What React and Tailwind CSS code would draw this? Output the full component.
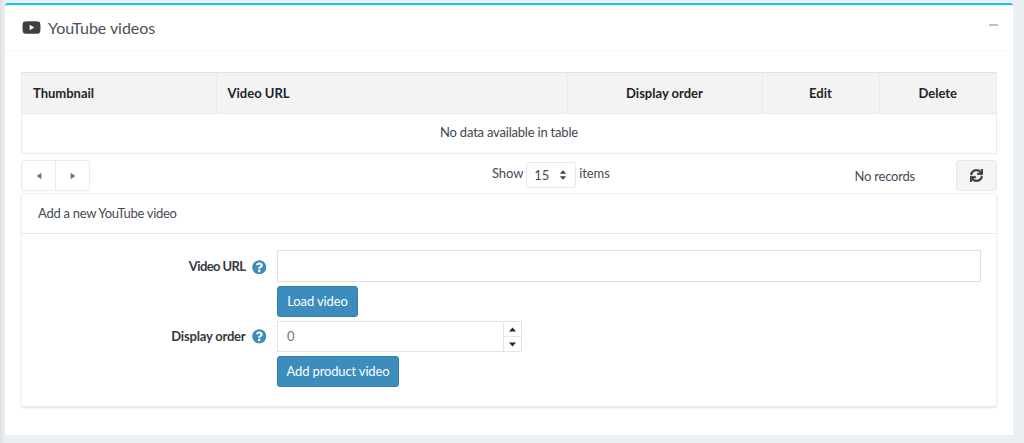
import React from "react";
import { FaYoutube, FaSync, FaQuestionCircle } from "react-icons/fa";

function Th({ children, className = "" }) {
  return <th className={`h-[40px] px-[11px] pt-[2px] text-[13px] font-bold text-[#212529] border-r border-[#e9ebee] last:border-r-0 ${className}`}>{children}</th>;
}

function Help() {
  return <FaQuestionCircle className="w-[14.5px] h-[14.5px] text-[#3c8dbc] shrink-0" />;
}

function Tri({ points, className }) {
  return (
    <svg viewBox="0 0 10 10" className={className} fill="currentColor">
      <polygon points={points} />
    </svg>
  );
}

export default function App() {
  return (
    <div className="h-[443px] overflow-hidden bg-[#ecf0f5] pt-[3px] pl-[5px] pr-[11px] font-['Lato','Liberation_Sans',sans-serif] text-[#444c56] bg-gradient-to-r from-[#dde1e6] to-[#ecf0f5] bg-[length:5px_100%] bg-no-repeat">
      <div className="h-[432px] bg-white rounded-t-[3px] border-t-2 border-[#0cc4f2] flex flex-col">
        <div className="h-[46px] shrink-0 border-b border-[#f6f7f8] flex items-center justify-between pl-[17px] pr-[15px]">
          <div className="flex items-center gap-[7px]">
            <FaYoutube className="w-[19px] h-[19px] text-[#3d4146]" />
            <span className="text-[16px] tracking-[-0.05px] text-[#4b5159]">YouTube videos</span>
          </div>
          <div className="w-[9px] h-[2px] bg-[#bcc2c9] mb-[6px]" />
        </div>

        <div className="px-[16px] pt-[21px]">
          <div className="border border-[#e9ebee] border-t-[#dfe2e5]">
            <table className="w-full table-fixed border-collapse">
              <colgroup>
                <col className="w-[194px]" />
                <col className="w-[351px]" />
                <col className="w-[195px]" />
                <col className="w-[117px]" />
                <col />
              </colgroup>
              <thead>
                <tr className="bg-[#f3f3f4] border-b border-[#e6e8ea]">
                  <Th className="text-left">Thumbnail</Th>
                  <Th className="text-left">Video URL</Th>
                  <Th className="text-center">Display order</Th>
                  <Th className="text-center">Edit</Th>
                  <Th className="text-center">Delete</Th>
                </tr>
              </thead>
              <tbody>
                <tr>
                  <td colSpan={5} className="h-[40px] pb-px text-center text-[13px] tracking-[-0.2px] text-[#3f464e]">No data available in table</td>
                </tr>
              </tbody>
            </table>
          </div>

          <div className="h-[32px] mt-[6px] flex items-start">
            <div className="w-[69px] h-[31px] flex border border-[#e9ebee] rounded-[3px] text-[#6c757d]">
              <div className="flex-1 flex items-center justify-center border-r border-[#e9ebee]">
                <Tri points="8,1 8,9 2,5" className="w-[8px] h-[8px]" />
              </div>
              <div className="flex-1 flex items-center justify-center">
                <Tri points="2,1 2,9 8,5" className="w-[8px] h-[8px]" />
              </div>
            </div>
            <div className="ml-[402px] flex items-center gap-[3px] pt-[2px] text-[13px] tracking-[-0.1px]">
              <span className="-mt-[2px]">Show</span>
              <div className="w-[50px] h-[26px] flex items-center justify-between border border-[#e6e8ea] rounded-[2px] pl-[7px] pr-[8px] text-[13px]">
                <span className="pt-[2px]">15</span>
                <svg viewBox="0 0 10 12" className="w-[8px] h-[10px] text-[#3f464e]" fill="currentColor">
                  <polygon points="5,0 9,4.5 1,4.5" />
                  <polygon points="5,12 9,7.5 1,7.5" />
                </svg>
              </div>
              <span className="-mt-[2px]">items</span>
            </div>
            <span className="ml-auto text-[13px] tracking-[-0.2px] mt-[7px] mr-[41px]">No records</span>
            <div className="w-[41px] h-[31px] flex items-center justify-center bg-[#f4f4f4] border border-[#e6e8ea] rounded-[3px]">
              <FaSync className="w-[13px] h-[13px] text-[#3a4046] stroke-[20px]" />
            </div>
          </div>

          <div className="h-[214px] mt-[1px] border border-[#eef0f2] rounded-[3px] shadow-[0_1px_2px_rgba(0,0,0,0.12)]">
            <div className="h-[40px] border-b border-[#e4e6e9] flex items-center pl-[16px] text-[13px] tracking-[-0.28px] text-[#444c56]">
              Add a new YouTube video
            </div>
            <div className="pt-[16px] flex flex-col">
              <div className="flex">
                <div className="w-[255px] h-[32px] pt-[2px] flex items-center justify-end gap-[6px] pr-[11px] text-[13px] tracking-[-0.6px] font-bold text-[#343a40]">
                  Video URL <Help />
                </div>
                <div className="w-[704px] h-[32px] border border-[#dcdfe3]" />
              </div>
              <div className="pl-[255px] mt-[4px]">
                <button className="w-[81px] h-[31px] bg-[#3c8dbc] border border-[#367fa9] rounded-[3px] text-white text-[13px] tracking-[-0.1px]">Load video</button>
              </div>
              <div className="flex mt-[4px]">
                <div className="w-[255px] h-[31px] flex items-center justify-end gap-[6px] pr-[11px] text-[13px] tracking-[-0.2px] font-bold text-[#343a40]">
                  Display order <Help />
                </div>
                <div className="w-[245px] h-[31px] flex border border-[#e1e3e7]">
                  <div className="flex-1 pl-[9px] flex items-center text-[13px] text-[#6c757d]">0</div>
                  <div className="w-[18px] flex flex-col border-l border-[#e1e3e7] text-[#23272b]">
                    <div className="flex-1 flex items-center justify-center border-b border-[#e1e3e7]">
                      <Tri points="5,2 10,8 0,8" className="w-[7px] h-[7px]" />
                    </div>
                    <div className="flex-1 flex items-center justify-center">
                      <Tri points="5,8 10,2 0,2" className="w-[7px] h-[7px]" />
                    </div>
                  </div>
                </div>
              </div>
              <div className="pl-[255px] mt-[4px]">
                <button className="w-[122px] h-[31px] bg-[#3c8dbc] border border-[#367fa9] rounded-[3px] text-white text-[13px] tracking-[-0.15px]">Add product video</button>
              </div>
            </div>
          </div>
        </div>
      </div>
    </div>
  );
}
